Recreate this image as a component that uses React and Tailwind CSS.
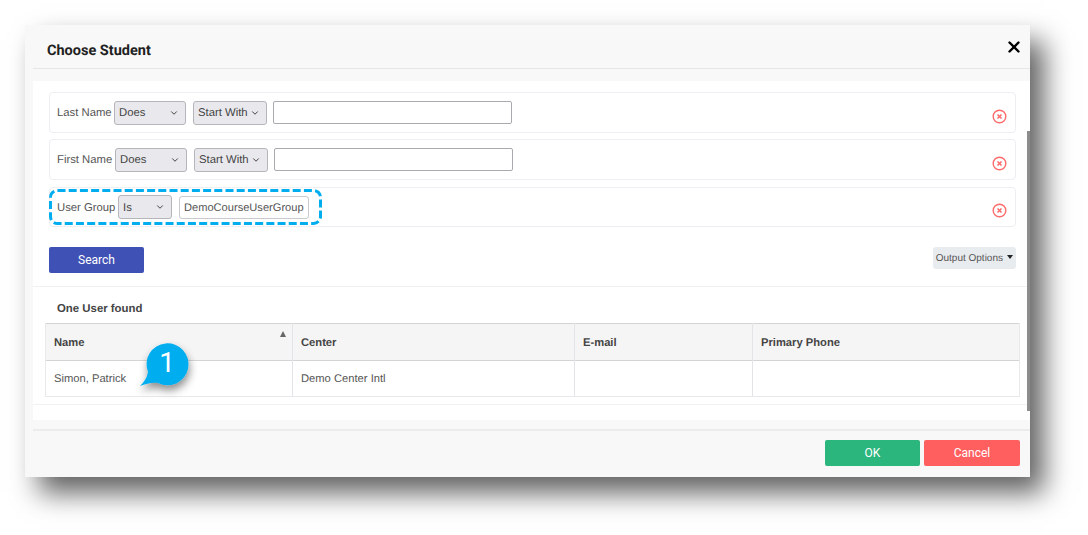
import { X, ChevronDown } from "lucide-react";

const sans = "font-['Liberation_Sans',Arial,sans-serif]";
const roboto = "font-['Roboto',sans-serif]";

const FakeSelect = ({ label, width }) => (
  <div
    className={`flex items-center justify-between h-[24px] ${width} pl-[4px] pr-[6px] bg-[#e9e9ed] border border-[#b5b5bb] rounded-[3px] text-[11.3px] text-[#444] whitespace-nowrap`}
  >
    <span className="pt-[2px]">{label}</span>
    <ChevronDown size={10} strokeWidth={2.4} className="text-[#444]" />
  </div>
);

const RemoveIcon = () => (
  <svg width="15" height="15" viewBox="0 0 15 15" fill="none" className="mt-[7px]">
    <circle cx="7.5" cy="7.5" r="6.3" stroke="#ff6b6b" strokeWidth="1.4" />
    <path d="M5.5 5.5l4 4M9.5 5.5l-4 4" stroke="#ff6b6b" strokeWidth="1.6" />
  </svg>
);

const FilterRow = ({ children, height = "h-[41px]", margin = "" }) => (
  <div
    className={`relative flex items-center justify-between ${height} ${margin} pl-[7px] pr-[8px] bg-white border border-[#eeeef2] rounded-[4px]`}
  >
    <div className="flex items-center">{children}</div>
    <RemoveIcon />
  </div>
);

const TextBox = ({ width }) => (
  <div className={`h-[23px] ${width} bg-white border border-[#a9a9af] rounded-[2px]`} />
);

const columns = [
  { name: "Name", value: "Simon, Patrick", width: "w-[247px]" },
  { name: "Center", value: "Demo Center Intl", width: "w-[282px]" },
  { name: "E-mail", value: "", width: "w-[178px]" },
  { name: "Primary Phone", value: "", width: "flex-1" },
];

const App = () => {
  return (
    <div className={`w-[1088px] h-[535px] overflow-hidden bg-white pl-[25px] pt-[25px] [text-rendering:geometricPrecision] ${sans}`}>
      <div className="relative flex flex-col w-[1005px] h-[452px] bg-[#f8f8f8] shadow-[14px_16px_26px_rgba(0,0,0,0.62)]">
        {/* Header */}
        <div className="flex items-center justify-between h-[44px] ml-[8px] pl-[14px] pr-[7px] border-b border-[#e6e6e6]">
          <h2 className={`mt-[8px] text-[14.5px] font-bold text-[#212121] ${roboto}`}>Choose Student</h2>
          <X size={18} strokeWidth={3.2} className="text-black" />
        </div>

        {/* Body */}
        <div className="relative flex flex-col h-[339px] mt-[12px] ml-[8px] bg-white">
          {/* Scrollbar */}
          <div className="absolute z-10 right-0 top-[50px] w-[3px] h-[280px] bg-[#8c8c8c]" />

          <div className="flex flex-col px-[16px] pt-[11px] pr-[14px]">
            <FilterRow>
              <span className="w-[57px] pt-[2px] text-[11.3px] text-[#555]">Last Name</span>
              <FakeSelect label="Does" width="w-[72px]" />
              <div className="w-[7px]" />
              <FakeSelect label="Start With" width="w-[74px]" />
              <div className="w-[6px]" />
              <TextBox width="w-[239px]" />
            </FilterRow>
            <FilterRow margin="mt-[6px]">
              <span className="w-[58px] pt-[2px] text-[11.3px] text-[#555]">First Name</span>
              <FakeSelect label="Does" width="w-[72px]" />
              <div className="w-[7px]" />
              <FakeSelect label="Start With" width="w-[74px]" />
              <div className="w-[6px]" />
              <TextBox width="w-[239px]" />
            </FilterRow>
            <FilterRow margin="mt-[7px]" height="h-[40px]">
              <span className="w-[61px] pt-[2px] text-[11.3px] text-[#555]">User Group</span>
              <FakeSelect label="Is" width="w-[54px]" />
              <div className="w-[7px]" />
              <div className="flex items-center h-[23px] px-[4px] pt-[2px] bg-white border border-[#c9c9cf] rounded-[3px] text-[11.1px] text-[#555]">
                DemoCourseUserGroup
              </div>
              {/* Highlight around the field */}
              <svg width="273" height="36" viewBox="0 0 273 36" fill="none" className="absolute -left-px top-px">
                <rect x="1.5" y="1.5" width="270" height="33" rx="7" stroke="#00aeef" strokeWidth="3" strokeDasharray="8 3.2" />
              </svg>
            </FilterRow>

            <div className="flex items-start justify-between mt-[20px]">
              <button className={`w-[95px] h-[26px] bg-[#3f51b5] rounded-[2px] text-[12px] text-white ${roboto}`}>
                Search
              </button>
              <div className="flex items-center h-[22px] pl-[3px] pr-[3px] pt-px bg-[#e9ecef] rounded-[3px] text-[10px] text-[#555]">
                Output Options
                <span className="ml-[4px] mb-[3px] border-x-[3.5px] border-x-transparent border-t-[4px] border-t-[#222]" />
              </div>
            </div>
          </div>

          {/* Results */}
          <div className="relative h-[119px] mt-[13px] pl-[12px] pr-[10px] bg-white border-y border-[#f1f1f4]">
            <div className="h-[36px] pl-[12px] pt-[15px] text-[11.4px] font-bold text-[#444] leading-[14px]">
              One User found
            </div>
            <div className="flex w-[975px] h-[74px] border border-[#e9e9ec]">
              {columns.map((col, i) => (
                <div
                  key={col.name}
                  className={`relative flex flex-col ${col.width} ${i < 3 ? "border-r border-[#e4e4e8]" : ""}`}
                >
                  <div className="flex items-center h-[38px] pl-[8px] pt-[2px] bg-[#f5f5f5] border-y border-y-[#d4d4d4] -mt-px text-[11.2px] font-bold text-[#444]">
                    {col.name}
                  </div>
                  <div className="flex items-center flex-1 pl-[8px] pt-[2px] text-[11.2px] text-[#555]">{col.value}</div>
                  {i === 0 && (
                    <span className="absolute right-[6px] top-[7px] border-x-[3.5px] border-x-transparent border-b-[6px] border-b-[#666]" />
                  )}
                </div>
              ))}
            </div>
            {/* Number callout */}
            <svg width="62" height="62" viewBox="0 0 62 62" className="absolute left-[97px] top-[49px] overflow-visible">
              <defs>
                <filter id="callout" x="-40%" y="-40%" width="200%" height="200%">
                  <feDropShadow dx="1" dy="5" stdDeviation="4" floodColor="#000" floodOpacity="0.45" />
                </filter>
              </defs>
              <path d="M10 50 C14 46 17 42 18 36 A21 21 0 1 1 28 47 C22 46 16 48 10 50 Z" fill="#00aeef" filter="url(#callout)" />
            </svg>
            <span className={`absolute left-[124px] top-[61px] w-[20px] text-center text-[28px] leading-[30px] text-white ${roboto}`}>
              1
            </span>
          </div>
        </div>

        {/* Footer */}
        <div className="flex flex-1 justify-end gap-[4px] ml-[8px] mt-[9px] pt-[9px] pr-[10px] border-t-2 border-[#ececec]">
          <button className={`w-[95px] h-[26px] bg-[#2bb67d] rounded-[2px] text-[12px] text-white ${roboto}`}>OK</button>
          <button className={`w-[96px] h-[26px] bg-[#ff5f5f] rounded-[2px] text-[12px] text-white ${roboto}`}>Cancel</button>
        </div>
      </div>
    </div>
  );
};

export default App;
